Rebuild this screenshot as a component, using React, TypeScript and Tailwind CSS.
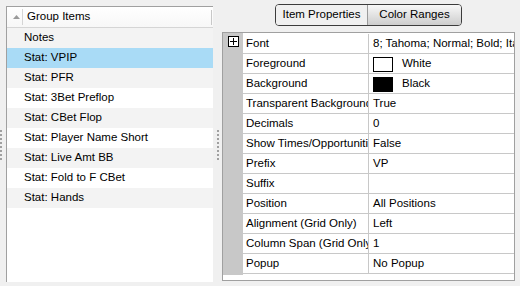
import React from "react";

const groupItems = [
  "Notes",
  "Stat: VPIP",
  "Stat: PFR",
  "Stat: 3Bet Preflop",
  "Stat: CBet Flop",
  "Stat: Player Name Short",
  "Stat: Live Amt BB",
  "Stat: Fold to F CBet",
  "Stat: Hands",
];

type Prop = { name: string; value: string; swatch?: string };

const props: Prop[] = [
  { name: "Font", value: "8; Tahoma; Normal; Bold; Italic" },
  { name: "Foreground", value: "White", swatch: "white" },
  { name: "Background", value: "Black", swatch: "black" },
  { name: "Transparent Background", value: "True" },
  { name: "Decimals", value: "0" },
  { name: "Show Times/Opportunities", value: "False" },
  { name: "Prefix", value: "VP" },
  { name: "Suffix", value: "" },
  { name: "Position", value: "All Positions" },
  { name: "Alignment (Grid Only)", value: "Left" },
  { name: "Column Span (Grid Only)", value: "1" },
  { name: "Popup", value: "No Popup" },
];

function Grip() {
  return (
    <div className="flex flex-col gap-[2px]">
      {Array.from({ length: 8 }).map((_, i) => (
        <div key={i} className="w-[2px] h-[2px] bg-[#a0a0a0]" />
      ))}
    </div>
  );
}

export default function App() {
  return (
    <div
      className="w-[520px] h-[286px] bg-[#f0f0f0] flex text-[11.5px] text-black overflow-hidden"
      style={{ fontFamily: '"Liberation Sans", Arial, sans-serif' }}
    >
      {/* left grip */}
      <div className="w-[6px] shrink-0 flex items-start pt-[130px]">
        <Grip />
      </div>

      {/* group items list */}
      <div className="mt-[6px] w-[207px] shrink-0 h-[276px] bg-white border-l border-t border-[#a0a0a0] flex flex-col">
        <div className="h-[21px] flex items-center border-b border-[#d5d5d5] bg-gradient-to-b from-white to-[#f7f7f7]">
          <div className="w-[15px] flex justify-center pl-[3px]">
            <svg width="7" height="4" viewBox="0 0 7 4">
              <path d="M0 4 L3.5 0 L7 4 Z" fill="#9a9a9a" />
            </svg>
          </div>
          <div className="w-px h-[16px] bg-[#d5d5d5]" />
          <span className="pl-[4px] flex-1">Group Items</span>
          <div className="w-px h-[15px] bg-[#c8c8c8] mr-[1px]" />
        </div>
        {groupItems.map((item, i) => (
          <div
            key={item}
            className={`h-[20px] flex items-center pl-[17px] ${
              i === 1 ? "bg-[#a9dbf6]" : i % 2 === 0 ? "bg-[#f3f3f3]" : "bg-white"
            }`}
          >
            {item}
          </div>
        ))}
      </div>

      {/* splitter */}
      <div className="w-[9px] shrink-0 flex justify-end pr-[3px] pt-[130px]">
        <Grip />
      </div>

      {/* properties */}
      <div className="w-[293px] shrink-0 flex flex-col">
        <div className="h-[32px] flex justify-center pt-[4px]">
          <div className="h-[22px] flex rounded-[4px] border border-[#3c3c3c] overflow-hidden">
            <div className="w-[92px] flex items-center justify-center bg-[#f0f0f0] border-r border-[#9a9a9a]">
              Item Properties
            </div>
            <div className="w-[93px] flex items-center justify-center bg-gradient-to-b from-[#f8f8f8] to-[#cdcdcd]">
              Color Ranges
            </div>
          </div>
        </div>

        <div className="h-[249px] border border-[#a0a0a0] bg-white pb-[5px] flex flex-col">
          <div className="flex-1 flex">
            <div className="w-[20px] shrink-0 bg-[#c8c8c8] pt-[3px] flex justify-center">
              <div className="w-[11px] h-[11px] border border-black bg-white flex items-center justify-center">
                <svg width="7" height="7" viewBox="0 0 7 7">
                  <path d="M0 3.5 H7 M3.5 0 V7" stroke="black" strokeWidth="1" />
                </svg>
              </div>
            </div>
            <div className="flex-1 min-w-0 pt-[1px] flex flex-col">
              {props.map((p) => (
                <div key={p.name} className="h-[20px] flex border-b border-[#c8c8c8]">
                  <div className="w-[126px] shrink-0 border-r border-[#c8c8c8] pl-[3px] pt-[1px] flex items-center overflow-hidden whitespace-nowrap">
                    {p.name}
                  </div>
                  <div className="flex-1 min-w-0 pl-[4px] pt-[1px] flex items-center overflow-hidden whitespace-nowrap">
                    {p.swatch && (
                      <div
                        className={`w-[20px] h-[15px] shrink-0 mr-[9px] border border-black ${
                          p.swatch === "black" ? "bg-black" : "bg-white"
                        }`}
                      />
                    )}
                    {p.value}
                  </div>
                </div>
              ))}
            </div>
          </div>
        </div>
      </div>
    </div>
  );
}
